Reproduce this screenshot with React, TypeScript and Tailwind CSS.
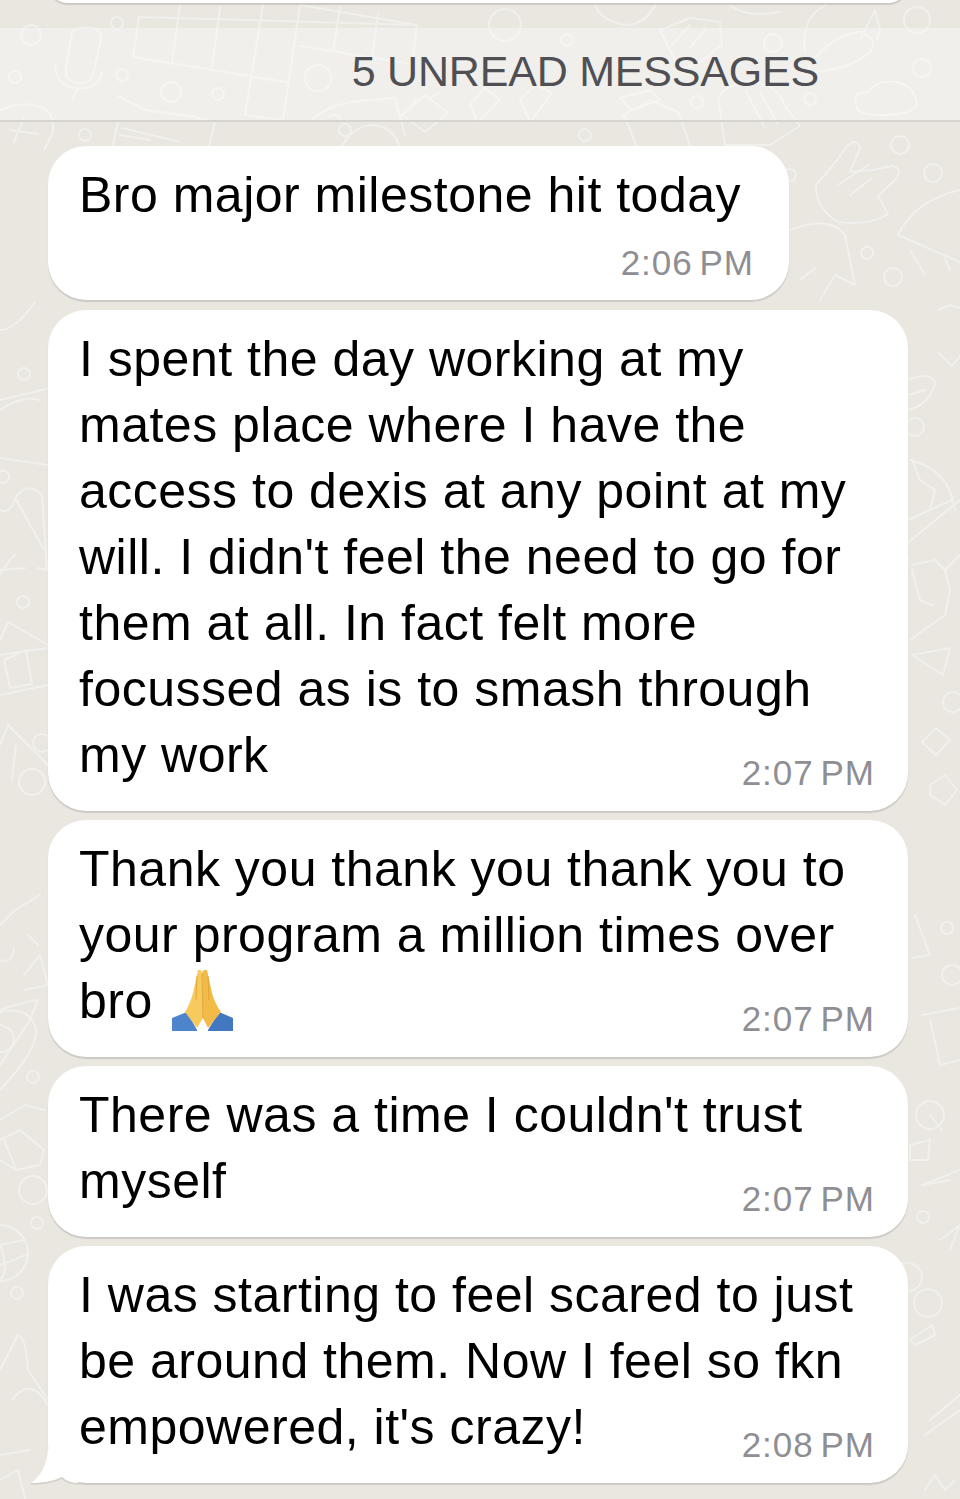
import React from 'react';

const rings: [number, number, number][] = [
  [31, 35, 10], [117, 23, 6], [15, 77, 6], [122, 75, 6], [171, 92, 10], [218, 94, 6], [318, 78, 13],
  [85, 135, 6], [505, 25, 16], [567, 40, 6], [697, 102, 6], [773, 43, 9], [810, 99, 6], [922, 68, 9],
  [917, 20, 13], [900, 145, 9], [933, 173, 9], [867, 253, 6], [893, 277, 9], [790, 175, 6],
  [24, 374, 6], [3, 477, 6], [23, 602, 6], [42, 743, 9], [32, 782, 13], [33, 1077, 6], [33, 1190, 14],
  [37, 1223, 6], [17, 1293, 6], [915, 427, 9], [953, 702, 10], [947, 928, 6], [952, 975, 10],
  [923, 1217, 6], [908, 1277, 14], [928, 1303, 14], [930, 1115, 14], [345, 130, 6], [585, 135, 6],
];

const lines = [
  // keyboard
  'M139 17L417 25M139 17L133 57L287 82M300 5L417 25L412 64L300 46M180 5L172 62M220 7L212 68M263 5L245 115L283 120L300 5M340 7L333 52M378 14L372 58M250 77L287 82',
  // microphone
  'M72 32Q76 26 92 28Q104 30 100 44L92 78Q86 86 74 82Q64 78 66 68ZM55 64Q56 88 78 88Q98 90 102 72M78 88L72 100',
  // left margin, top
  'M0 110Q24 100 44 108Q56 116 52 135L44 150M24 118L14 142M10 130L38 134',
  'M118 122L112 150M118 96L145 110L190 116L215 122L208 150',
  'M122 128L180 142M120 135L150 140',
  'M312 120Q330 102 372 100L395 98L405 135M340 150Q350 128 370 125Q395 125 400 150M330 116Q338 112 342 122',
  'M402 115L425 95L448 113L425 132ZM412 105L416 98M430 98L440 92',
  'M470 105L485 88L500 100L478 122ZM520 100L535 85L552 93L530 122Z',
  'M622 117L628 112Q640 108 650 100L678 112L690 145M625 117L638 150M620 98L650 90L660 100L632 110Z',
  'M720 110Q712 88 745 82Q775 80 785 106L800 126L770 145L725 145Z M745 90L765 128M760 92L778 124',
  'M660 30L690 18L720 22L722 45L700 62L680 70ZM690 25L672 45M706 28L690 48',
  'M805 50Q800 20 825 5M860 40L875 10L880 30L877 40M808 68Q830 35 860 32Q880 40 870 52Q850 70 812 72Z',
  'M858 110Q850 92 868 92Q875 80 895 82Q915 85 917 105Q912 115 880 115Q862 115 858 110Z',
  'M595 5Q600 20 625 25Q645 25 655 5M730 5Q745 18 780 12',
  // rock hand
  'M816 185Q830 170 848 145Q858 138 860 148L850 172L872 170L892 166Q904 168 895 180L878 196L888 214Q870 226 838 222Q815 208 816 185ZM838 185L868 165M850 195L872 178',
  // taco
  'M898 235Q915 200 960 190M898 235L960 262M910 250L925 275M945 258L950 270',
  'M790 230Q830 215 845 235L855 285L835 275L820 300M800 280L815 268',
  // lower left margin
  'M0 330Q15 330 35 302M0 400L50 388M0 410Q22 395 40 400M0 458L48 465',
  'M0 510Q10 515 15 498Q28 480 42 495L47 570L38 568M15 498L22 510L44 550M0 570L25 568M0 575Q12 555 16 555',
  'M0 640L8 622L48 645M0 655L48 648M0 695L48 685M4 660L10 688L32 684L26 650Z',
  'M0 745L8 725L48 765M16 745L12 780M0 925L15 910L40 895M0 1010Q30 1000 38 1000L30 1020L0 1065',
  'M24 975L40 955L48 985L24 990M0 960Q12 965 14 948M28 935L38 945',
  'M0 1120L25 1105L45 1110M0 1140L20 1130L44 1150L40 1165L16 1170L0 1160M16 1170L4 1140',
  'M0 1370L18 1335Q26 1338 28 1370L48 1400M12 1400Q30 1375 48 1405M0 1455L30 1450M0 1480L18 1470L25 1499',
  // right margin
  'M938 310L950 305L960 308M938 352L952 366L960 356M908 380Q935 370 935 385Q928 405 908 410M908 395L925 390',
  'M910 460Q950 470 955 510M908 520L952 500M960 500L905 545L908 560M912 460L920 480L935 490L930 510L908 520',
  'M912 565L935 560L945 570L950 590L945 615L910 640M945 570L960 555M912 570L920 600L932 605',
  'M912 655L950 648L943 675ZM912 655L943 675',
  'M922 742L936 728L950 740L936 755ZM930 785L945 775L957 790L945 805L930 795Z',
  'M915 915L930 955L912 958M922 1015L960 1008M930 1020L940 1065L960 1060',
  'M942 1130L930 1115M910 1145L930 1140L928 1160L910 1160Z',
  'M922 1185L960 1170M922 1185L950 1180M940 1240L960 1225L950 1250M910 1340L932 1325L935 1335L915 1345Z',
  'M930 1420L960 1395M925 1435L960 1410M925 1490L935 1475L945 1490L955 1480',
];

function Doodles() {
  return (
    <svg className="absolute inset-0" width="960" height="1499" viewBox="0 0 960 1499" fill="none" stroke="#f1f0ec" strokeWidth="2" strokeLinecap="round" strokeLinejoin="round">
      {rings.map(([cx, cy, r], i) => (
        <circle key={i} cx={cx} cy={cy} r={r} />
      ))}
      {lines.map((d, i) => (
        <path key={i} d={d} />
      ))}
      {/* heart, globe */}
      <path d="M0 1012Q30 1005 36 1030Q38 1050 0 1090M0 1025Q14 1028 14 1040Q12 1052 0 1052" />
      <circle cx="0" cy="1253" r="28" />
      <path d="M0 1245L24 1240M0 1265L26 1255M0 1245Q10 1270 0 1280" />
    </svg>
  );
}

function PrayingHands() {
  return (
    <svg className="inline-block align-top mt-[2px] ml-[3px]" width="64" height="62" viewBox="0 0 64 62">
      <path d="M2 48L17 42L27 60L27 61L2 61Z" fill="#4d84cc" />
      <path d="M63 48L49 42L38 60L38 61L63 61Z" fill="#4278c2" />
      <path d="M28 0Q31 -1 32 3L33 48L27 58L15 42Q20 34 23 23Z" fill="#f8c95d" />
      <path d="M37 0Q33 -1 32 3L33 48L38 58L51 42Q45 34 42 23Z" fill="#f2bb48" />
      <path d="M32 4L33 48M27 6L26 30M38 6L39 30" stroke="#d99e30" strokeWidth="0.8" fill="none" />
    </svg>
  );
}

function Time({ className = '', children }: { className?: string; children: React.ReactNode }) {
  return (
    <span className={`text-[35px] leading-[40px] text-[#8e8e93] tracking-[1px] [word-spacing:-4px] whitespace-nowrap ${className}`}>
      {children}
    </span>
  );
}

function Bubble({ text, time, className = '' }: { text: React.ReactNode; time: string; className?: string }) {
  return (
    <div className={`relative rounded-[38px] bg-white pl-[31px] pr-[33px] pt-[16px] pb-[23px] shadow-[0_2px_1px_rgba(0,0,0,0.13)] ${className}`}>
      <p className="text-[50px] leading-[66px] tracking-[0.5px] text-black whitespace-nowrap">{text}</p>
      <Time className="absolute right-[33px] bottom-[18px]">{time}</Time>
    </div>
  );
}

export default function App() {
  return (
    <div className="relative w-[960px] h-[1499px] overflow-hidden bg-[#e9e7e0] font-['Liberation_Sans',sans-serif]">
      <Doodles />
      <div className="relative flex flex-col">
        {/* tail end of previous message */}
        <div className="ml-[48px] mr-[52px] h-[40px] -mt-[37px] rounded-[38px] bg-white shadow-[0_2px_1px_rgba(0,0,0,0.13)]" />

        <div className="mt-[25px] h-[94px] pb-[7px] flex items-center justify-end pr-[141px] bg-white/35 border-t border-[#f1f0ec] border-b-2 border-b-[#d6d4ce]">
          <span className="text-[43px] leading-none text-[#4f4f54] tracking-[-0.2px]">5 UNREAD MESSAGES</span>
        </div>

        <div className="mt-[24px] pl-[48px] pr-[52px] flex flex-col items-start">
          <div className="w-[741px] rounded-[38px] bg-white pl-[31px] pr-[35px] pt-[16px] pb-[21px] shadow-[0_2px_1px_rgba(0,0,0,0.13)]">
            <p className="text-[50px] leading-[66px] tracking-[0.5px] text-black whitespace-nowrap">Bro major milestone hit today</p>
            <div className="mt-[15px] -mb-[4px] flex justify-end">
              <Time>2:06 PM</Time>
            </div>
          </div>

          <Bubble
            className="w-full mt-[10px]"
            time="2:07 PM"
            text={
              <>
                I spent the day working at my<br />
                mates place where I have the<br />
                access to dexis at any point at my<br />
                will. I didn't feel the need to go for<br />
                them at all. In fact felt more<br />
                focussed as is to smash through<br />
                my work
              </>
            }
          />

          <Bubble
            className="w-full mt-[9px]"
            time="2:07 PM"
            text={
              <>
                Thank you thank you thank you to<br />
                your program a million times over<br />
                bro <PrayingHands />
              </>
            }
          />

          <Bubble
            className="w-full mt-[9px]"
            time="2:07 PM"
            text={
              <>
                There was a time I couldn't trust<br />
                myself
              </>
            }
          />

          <div className="relative w-full mt-[9px]">
            <Bubble
              className="w-full"
              time="2:08 PM"
              text={
                <>
                  I was starting to feel scared to just<br />
                  be around them. Now I feel so fkn<br />
                  empowered, it's crazy!
                </>
              }
            />
            {/* speech tail */}
            <svg className="absolute -left-[18px] bottom-[-2px]" width="48" height="36" viewBox="0 0 48 36">
              <path d="M18 0Q17 22 1 34Q20 34 32 28Q38 34 48 34L48 0Z" fill="#ffffff" />
              <path d="M1 35Q20 35 32 29Q38 35 48 35" stroke="#d2d0c9" strokeWidth="1.5" fill="none" />
            </svg>
          </div>
        </div>
      </div>
    </div>
  );
}
